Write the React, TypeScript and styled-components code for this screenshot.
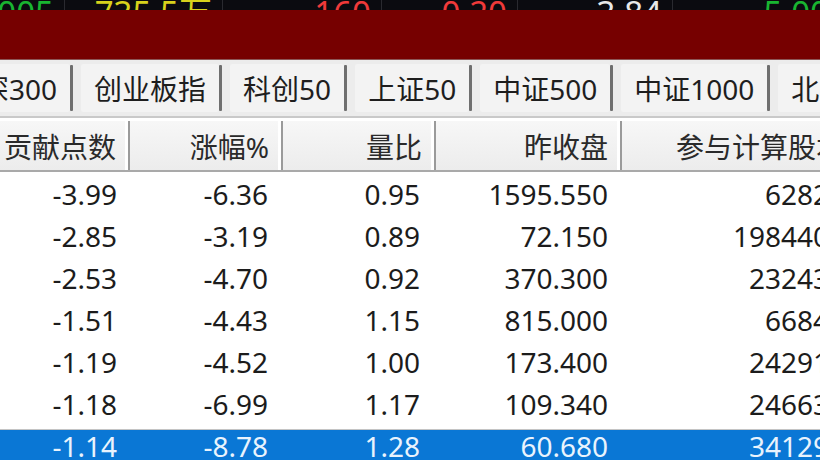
import { Fragment } from "react"
import styled, { createGlobalStyle } from "styled-components"

const GlobalStyle = createGlobalStyle`
  html, body {
    margin: 0;
    padding: 0;
    background: #ffffff;
  }
  body {
    width: 820px;
    height: 460px;
    overflow: hidden;
    font-family: "Noto Sans", "Noto Sans CJK SC", sans-serif;
  }
`

const Screen = styled.div`
  display: flex;
  flex-direction: column;
  width: 820px;
  height: 460px;
  overflow: hidden;
  background: #ffffff;
`

/* quote strip at the very top, mostly hidden behind the panel title */
const QuoteStrip = styled.div`
  display: flex;
  align-items: flex-start;
  height: 10px;
  overflow: hidden;
  background: #0b0b10;
  flex-shrink: 0;
`

const QuoteCell = styled.div<{ $w: number; $color: string }>`
  display: flex;
  justify-content: flex-end;
  flex: 0 0 ${(p) => p.$w}px;
  min-width: 0;
  overflow: hidden;
  box-sizing: border-box;
  padding-right: 10px;
  margin-top: -4px;
  font-size: 33px;
  line-height: 33px;
  color: ${(p) => p.$color};
  border-right: 1px solid #2a2a30;
  white-space: nowrap;
`

const TitleBand = styled.div`
  height: 49px;
  background: #760000;
  border-bottom: 1px solid #8c5656;
  flex-shrink: 0;
`

const TabBar = styled.div`
  display: flex;
  align-items: center;
  height: 56px;
  margin-left: -68px;
  background: #ececec;
  border-bottom: 2px solid #c9c9c9;
  flex-shrink: 0;
`

const Tab = styled.div`
  display: flex;
  align-items: center;
  height: 48px;
  margin-left: 8px;
  padding: 0 13px;
  background: #f3f3f3;
  border-radius: 2px;
  font-size: 28px;
  color: #1e1e1e;
  white-space: nowrap;
`

const TabDivider = styled.div`
  width: 3px;
  height: 46px;
  background: #6f6f6f;
  border-radius: 1px;
  flex-shrink: 0;
`

const Table = styled.div`
  display: flex;
  flex-direction: column;
  margin-top: 2px;
`

const columns = "130px 153px 153px 186px 236px"

const HeaderRow = styled.div`
  display: grid;
  grid-template-columns: ${columns};
  height: 49px;
  background: linear-gradient(#f7f7f7, #ececec);
  border-top: 1px solid #ffffff;
  border-bottom: 2px solid #a9a9a9;
`

const HeaderCell = styled.div`
  display: flex;
  align-items: center;
  justify-content: flex-end;
  padding-right: 12px;
  font-size: 28px;
  color: #2a2a2a;
  border-right: 2px solid #9a9a9a;
  box-shadow: inset -3px 0 0 #ffffff;
  white-space: nowrap;
`

const Body = styled.div`
  display: flex;
  flex-direction: column;
  padding-top: 1px;
`

const Row = styled.div<{ $selected?: boolean }>`
  display: grid;
  grid-template-columns: ${columns};
  height: 42px;
  background: ${(p) =>
    p.$selected
      ? "linear-gradient(#ffffff 0 4px, #c4c4c4 4px 5px, #0a77d5 5px)"
      : "#ffffff"};
  color: ${(p) => (p.$selected ? "#e9f3fd" : "#1c1c1c")};
`

const Cell = styled.div<{ $pad: number }>`
  display: flex;
  align-items: center;
  justify-content: flex-end;
  padding-right: ${(p) => p.$pad}px;
  font-size: 28px;
  white-space: nowrap;
`

const quotes = [
  { text: "2005", color: "#19b531", w: 65 },
  { text: "735.5万", color: "#d8d21c", w: 158 },
  { text: "160", color: "#f03a3a", w: 159 },
  { text: "0.20", color: "#f03a3a", w: 136 },
  { text: "3.84", color: "#e8e8e8", w: 155 },
  { text: "5.00", color: "#19b531", w: 167 },
]

const tabs = ["沪深300", "创业板指", "科创50", "上证50", "中证500", "中证1000", "北证50"]

const headers = ["贡献点数", "涨幅%", "量比", "昨收盘", "参与计算股本"]
const pads = [13, 15, 16, 14, 13]

const rows = [
  ["-3.99", "-6.36", "0.95", "1595.550", "62826"],
  ["-2.85", "-3.19", "0.89", "72.150", "1984406"],
  ["-2.53", "-4.70", "0.92", "370.300", "232432"],
  ["-1.51", "-4.43", "1.15", "815.000", "66843"],
  ["-1.19", "-4.52", "1.00", "173.400", "242917"],
  ["-1.18", "-6.99", "1.17", "109.340", "246632"],
  ["-1.14", "-8.78", "1.28", "60.680", "341296"],
]

export default function App() {
  return (
    <Screen>
      <GlobalStyle />
      <QuoteStrip>
        {quotes.map((q, i) => (
          <QuoteCell key={i} $w={q.w} $color={q.color}>
            {q.text}
          </QuoteCell>
        ))}
      </QuoteStrip>
      <TitleBand />
      <TabBar>
        {tabs.map((t, i) => (
          <Fragment key={t}>
            <Tab>{t}</Tab>
            {i < tabs.length - 1 && <TabDivider />}
          </Fragment>
        ))}
      </TabBar>
      <Table>
        <HeaderRow>
          {headers.map((h) => (
            <HeaderCell key={h}>{h}</HeaderCell>
          ))}
        </HeaderRow>
        <Body>
          {rows.map((r, i) => (
            <Row key={i} $selected={i === rows.length - 1}>
              {r.map((v, j) => (
                <Cell key={j} $pad={pads[j]}>
                  {v}
                </Cell>
              ))}
            </Row>
          ))}
        </Body>
      </Table>
    </Screen>
  )
}
